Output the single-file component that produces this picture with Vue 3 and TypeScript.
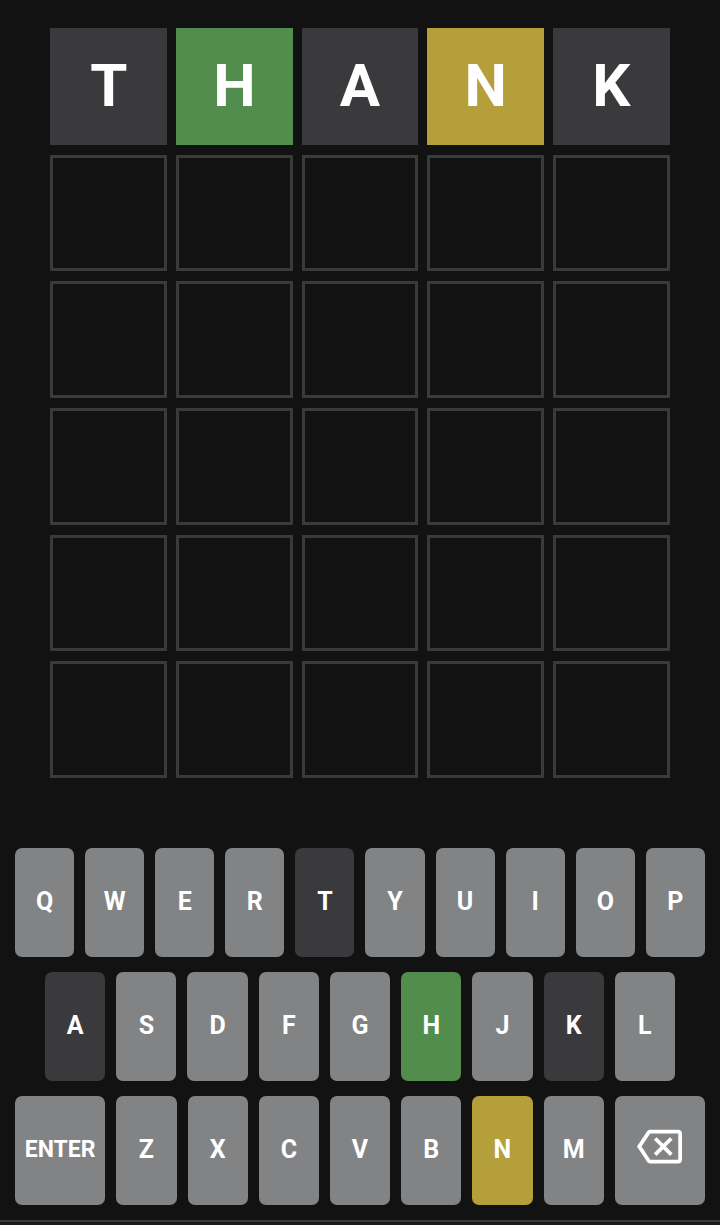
<script setup lang="ts">
import { ref, computed } from 'vue'

type Mark = 'correct' | 'present' | 'absent'

interface Guess {
  word: string
  marks: Mark[]
}

const WORD_LENGTH = 5
const MAX_GUESSES = 6

const guesses = ref<Guess[]>([
  { word: 'THANK', marks: ['absent', 'correct', 'absent', 'present', 'absent'] },
])
const draft = ref('')

const keyRows: string[][] = [
  [...'QWERTYUIOP'],
  [...'ASDFGHJKL'],
  ['ENTER', ...'ZXCVBNM', 'BACKSPACE'],
]

const board = computed(() =>
  Array.from({ length: MAX_GUESSES }, (_, row) =>
    Array.from({ length: WORD_LENGTH }, (_, col) => {
      const guess = guesses.value[row]
      if (guess) return { letter: guess.word[col], mark: guess.marks[col] as string }
      const letter = row === guesses.value.length ? draft.value[col] ?? '' : ''
      return { letter, mark: 'empty' }
    }),
  ),
)

const keyMarks = computed(() => {
  const rank: Record<Mark, number> = { absent: 1, present: 2, correct: 3 }
  const result: Record<string, Mark> = {}
  for (const guess of guesses.value) {
    guess.marks.forEach((mark, i) => {
      const letter = guess.word[i]
      if (!result[letter] || rank[mark] > rank[result[letter]]) result[letter] = mark
    })
  }
  return result
})

function press(key: string) {
  if (key === 'BACKSPACE') draft.value = draft.value.slice(0, -1)
  else if (key !== 'ENTER' && draft.value.length < WORD_LENGTH) draft.value += key
}
</script>

<template>
  <div class="game">
    <main class="board" aria-label="Board">
      <div v-for="(row, r) in board" :key="r" class="board-row">
        <div v-for="(tile, c) in row" :key="c" class="tile" :class="tile.mark">{{ tile.letter }}</div>
      </div>
    </main>

    <section class="keyboard" aria-label="Keyboard">
      <div v-for="(row, r) in keyRows" :key="r" class="key-row" :class="{ inset: r === 1 }">
        <button
          v-for="key in row"
          :key="key"
          type="button"
          class="key"
          :class="[keyMarks[key], { wide: key.length > 1 }]"
          :aria-label="key.toLowerCase()"
          @click="press(key)"
        >
          <svg v-if="key === 'BACKSPACE'" class="icon" viewBox="0 0 24 24" aria-hidden="true">
            <path
              fill="currentColor"
              d="M22 3H7c-.69 0-1.23.35-1.59.88L0 12l5.41 8.11c.36.53.9.89 1.59.89h15c1.1 0 2-.9 2-2V5c0-1.1-.9-2-2-2zm0 16H7.07L2.4 12l4.66-7H22v14zm-11.59-2L14 13.41 17.59 17 19 15.59 15.41 12 19 8.41 17.59 7 14 10.59 10.41 7 9 8.41 12.59 12 9 15.59z"
            />
          </svg>
          <template v-else>{{ key }}</template>
        </button>
      </div>
    </section>

    <footer class="bottom-bar"></footer>
  </div>
</template>

<style>
body {
  margin: 0;
  background: #121213;
}
</style>

<style scoped>
.game {
  display: flex;
  flex-direction: column;
  min-height: 100vh;
  box-sizing: border-box;
  padding-top: 28px;
  background: #121213;
  color: #fff;
  font-family: Roboto, "Liberation Sans", sans-serif;
  font-weight: 700;
}

.board {
  display: flex;
  flex-direction: column;
  gap: 10px;
  width: 86%;
  margin: 0 auto 70px;
}

.board-row {
  display: grid;
  grid-template-columns: repeat(5, 1fr);
  gap: 9px;
}

.tile {
  display: flex;
  align-items: center;
  justify-content: center;
  box-sizing: border-box;
  min-width: 0;
  aspect-ratio: 1;
  font-size: 60px;
  line-height: 60px;
}

.empty {
  border: 3px solid #3a3a3c;
}

.keyboard {
  display: flex;
  flex-direction: column;
  gap: 15px;
  padding: 0 15px;
}

.key-row {
  display: flex;
  gap: 11px;
}

.inset {
  padding: 0 30px;
}

.key {
  display: flex;
  flex: 1 1 0;
  align-items: center;
  justify-content: center;
  min-width: 0;
  height: 109px;
  margin: 0;
  padding: 0;
  border: 0;
  border-radius: 7px;
  background: #818384;
  color: #fff;
  font: inherit;
  font-size: 25px;
  line-height: 30px;
  cursor: pointer;
}

.wide {
  flex-grow: 1.5;
  font-size: 23px;
}

.icon {
  width: 45px;
  height: 45px;
  padding-bottom: 7px;
}

.correct {
  background: #538d4e;
}

.present {
  background: #b59f3b;
}

.absent {
  background: #3a3a3c;
}

.bottom-bar {
  height: 3px;
  margin-top: auto;
  border-top: 2px solid #3a3a3c;
  background: #1a1a1b;
}
</style>
